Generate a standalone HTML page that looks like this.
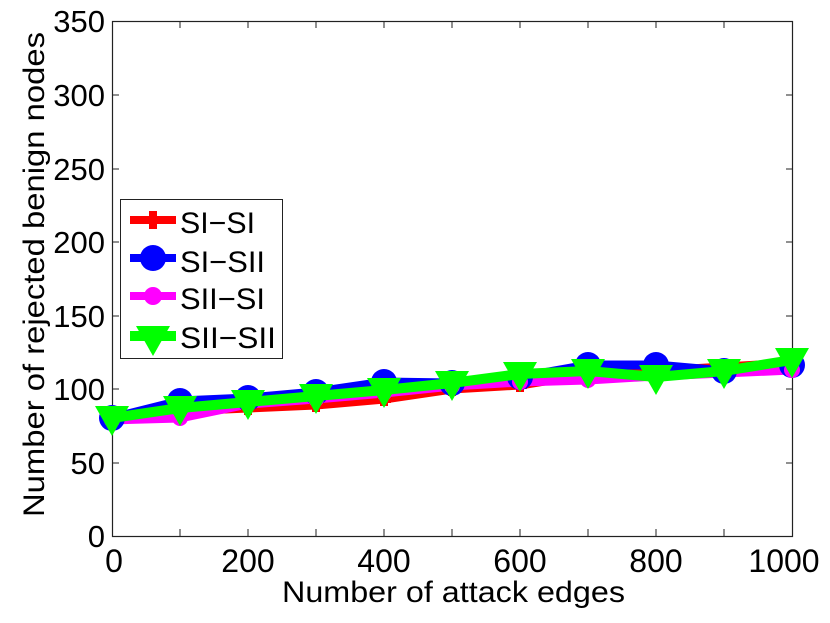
<!DOCTYPE html><html><head><style>body{margin:0;background:#fff}svg{display:block}text{font-family:"Liberation Sans",sans-serif;fill:#000}</style></head><body>
<svg width="830" height="623" viewBox="0 0 830 623">
<rect x="112.5" y="21.5" width="680" height="515" fill="none" stroke="#222" stroke-width="1.2"/>
<g stroke="#222" stroke-width="1">
<path d="M112 463h7M112 389h7M112 316h7M112 242h7M112 169h7M112 95h7M786 463h6M786 389h6M786 316h6M786 242h6M786 169h6M786 95h6"/>
<path d="M180 536v-7M248 536v-7M316 536v-7M384 536v-7M452 536v-7M520 536v-7M588 536v-7M656 536v-7M724 536v-7M180 21v7M248 21v7M316 21v7M384 21v7M452 21v7M520 21v7M588 21v7M656 21v7M724 21v7"/>
</g>
<g font-size="31" text-anchor="end">
<text x="105" y="547">0</text><text x="105" y="474">50</text><text x="105" y="400">100</text><text x="105" y="327">150</text><text x="105" y="253">200</text><text x="105" y="180">250</text><text x="105" y="106">300</text><text x="105" y="32">350</text>
</g>
<g font-size="32" text-anchor="middle">
<text x="114" y="572">0</text><text x="248" y="572">200</text><text x="384" y="572">400</text><text x="520" y="572">600</text><text x="656" y="572">800</text><text x="784" y="572">1000</text>
</g>
<text x="282" y="602" font-size="30" textLength="343" lengthAdjust="spacingAndGlyphs">Number of attack edges</text>
<text transform="translate(44,517) rotate(-90)" font-size="30" textLength="485" lengthAdjust="spacingAndGlyphs">Number of rejected benign nodes</text>
<g fill="none" stroke-linejoin="round">
<polyline stroke="#f00" stroke-width="9" points="112,418 180,411 248,408 316,405 384,399 452,389 520,385 588,374 656,371 724,367 792,363"/>
<polyline stroke="#00f" stroke-width="9" points="112,418 180,401 248,398 316,392 384,382 452,383 520,377 588,365 656,365 724,371 792,365"/>
<polyline stroke="#f0f" stroke-width="9" points="112,420 180,418 248,404 316,399 384,393 452,386 520,382 588,380 656,376 724,373 792,370"/>
</g>
<g fill="#f00">
<path d="M-7 -4h14v8h-14zM-4 -7h8v14h-8z" transform="translate(112,418)"/><path d="M-7 -4h14v8h-14zM-4 -7h8v14h-8z" transform="translate(180,411)"/><path d="M-7 -4h14v8h-14zM-4 -7h8v14h-8z" transform="translate(248,408)"/><path d="M-7 -4h14v8h-14zM-4 -7h8v14h-8z" transform="translate(316,405)"/><path d="M-7 -4h14v8h-14zM-4 -7h8v14h-8z" transform="translate(384,399)"/><path d="M-7 -4h14v8h-14zM-4 -7h8v14h-8z" transform="translate(452,389)"/><path d="M-7 -4h14v8h-14zM-4 -7h8v14h-8z" transform="translate(520,385)"/><path d="M-7 -4h14v8h-14zM-4 -7h8v14h-8z" transform="translate(588,374)"/><path d="M-7 -4h14v8h-14zM-4 -7h8v14h-8z" transform="translate(656,371)"/><path d="M-7 -4h14v8h-14zM-4 -7h8v14h-8z" transform="translate(724,367)"/><path d="M-7 -4h14v8h-14zM-4 -7h8v14h-8z" transform="translate(792,363)"/></g>
<g fill="#00f"><circle cx="112" cy="418" r="13"/><circle cx="180" cy="401" r="13"/><circle cx="248" cy="398" r="13"/><circle cx="316" cy="392" r="13"/><circle cx="384" cy="382" r="13"/><circle cx="452" cy="383" r="13"/><circle cx="520" cy="377" r="13"/><circle cx="588" cy="365" r="13"/><circle cx="656" cy="365" r="13"/><circle cx="724" cy="371" r="13"/><circle cx="792" cy="365" r="13"/></g>
<g fill="#f0f"><circle cx="112" cy="420" r="8"/><circle cx="180" cy="418" r="8"/><circle cx="248" cy="404" r="8"/><circle cx="316" cy="399" r="8"/><circle cx="384" cy="393" r="8"/><circle cx="452" cy="386" r="8"/><circle cx="520" cy="382" r="8"/><circle cx="588" cy="380" r="8"/><circle cx="656" cy="376" r="8"/><circle cx="724" cy="373" r="8"/><circle cx="792" cy="370" r="8"/></g>
<polyline fill="none" stroke="#0f0" stroke-width="10" stroke-linejoin="round" points="112,418 180,408 248,402 316,396 384,390 452,383 520,374 588,371 656,377 724,371 792,360"/>
<g fill="#0f0">
<path d="M95 406h34l-17 30z"/><path d="M163 396h34l-17 30z"/><path d="M231 390h34l-17 30z"/><path d="M299 384h34l-17 30z"/><path d="M367 378h34l-17 30z"/><path d="M435 371h34l-17 30z"/><path d="M503 362h34l-17 30z"/><path d="M571 359h34l-17 30z"/><path d="M639 365h34l-17 30z"/><path d="M707 359h34l-17 30z"/><path d="M775 348h34l-17 30z"/>
</g>
<rect x="120.5" y="199.5" width="162" height="159" fill="#fff" stroke="#222" stroke-width="1"/>
<g font-size="30">
<text x="180" y="233" textLength="75" lengthAdjust="spacingAndGlyphs">SI−SI</text><text x="180" y="272" textLength="85" lengthAdjust="spacingAndGlyphs">SI−SII</text><text x="180" y="309" textLength="85" lengthAdjust="spacingAndGlyphs">SII−SI</text><text x="180" y="348" textLength="96" lengthAdjust="spacingAndGlyphs">SII−SII</text>
</g>
<rect x="130" y="216" width="46" height="8" fill="#f00"/><path d="M149 211h8v18h-8z" fill="#f00"/>
<rect x="130" y="254" width="46" height="8" fill="#00f"/><circle cx="153" cy="258" r="13" fill="#00f"/>
<rect x="130" y="292" width="46" height="8" fill="#f0f"/><circle cx="153" cy="296" r="9" fill="#f0f"/>
<rect x="130" y="331" width="46" height="10" fill="#0f0"/><path d="M136 326h34l-17 30z" fill="#0f0"/>
</svg></body></html>
